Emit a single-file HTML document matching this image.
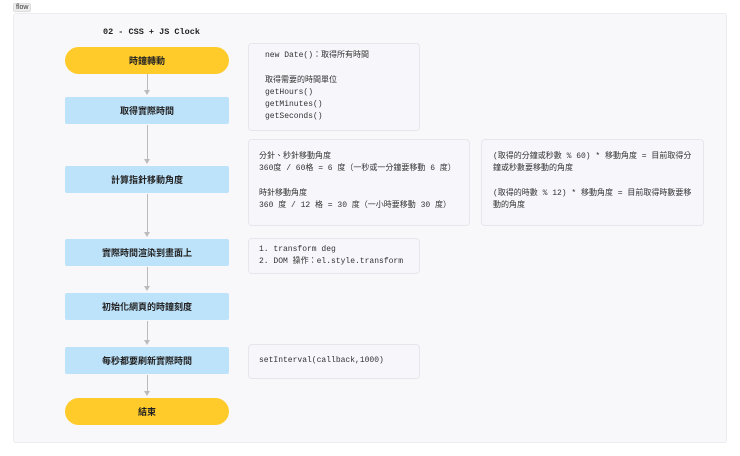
<!DOCTYPE html>
<html><head><meta charset="utf-8"><style>
body{margin:0;width:740px;height:456px;background:#fff;position:relative;font-family:"Liberation Mono","Noto Sans CJK TC",monospace;overflow:hidden}
.tag{position:absolute;left:13px;top:3px;font:7px "Liberation Sans",sans-serif;background:#eee;border:1px solid #ddd;border-radius:2px;padding:0 2px;color:#333}
.wrap{position:absolute;left:13px;top:13px;width:712px;height:428px;background:#f8f8fa;border:1px solid #ececee;border-radius:3px}
.title{position:absolute;left:103px;top:27px;font-size:8.5px;font-weight:bold;color:#222}
.n{position:absolute;left:65px;width:164px;height:27px;display:flex;align-items:center;justify-content:center;font:bold 9px "Liberation Sans","Noto Sans CJK TC",sans-serif;color:#222}
.y{background:#ffcb2b;border-radius:14px}
.b{background:#bde3fb;border-radius:2px}
.l{position:absolute;left:147px;width:1px;background:#bbb}
.a{position:absolute;left:144px;width:0;height:0;border-left:3.5px solid transparent;border-right:3.5px solid transparent;border-top:5px solid #bbb}
.box{position:absolute;background:#f7f6fb;border:1px solid #e6e6ec;border-radius:4px;font-size:8px;line-height:12.3px;color:#333;white-space:pre;box-sizing:border-box}
</style></head><body>
<div class="tag">flow</div>
<div class="wrap"></div>
<div class="title">02 - CSS + JS Clock</div>
<div class="n y" style="top:47px">時鐘轉動</div>
<div class="n b" style="top:97px">取得實際時間</div>
<div class="n b" style="top:166px">計算指針移動角度</div>
<div class="n b" style="top:239px">實際時間渲染到畫面上</div>
<div class="n b" style="top:293px">初始化網頁的時鐘刻度</div>
<div class="n b" style="top:347px">每秒都要刷新實際時間</div>
<div class="n y" style="top:398px">結束</div>
<div class="l" style="top:74px;height:18px"></div><div class="a" style="top:90px"></div>
<div class="l" style="top:125px;height:36px"></div><div class="a" style="top:159px"></div>
<div class="l" style="top:194px;height:40px"></div><div class="a" style="top:232px"></div>
<div class="l" style="top:267px;height:21px"></div><div class="a" style="top:286px"></div>
<div class="l" style="top:321px;height:21px"></div><div class="a" style="top:340px"></div>
<div class="l" style="top:375px;height:18px"></div><div class="a" style="top:391px"></div>
<div class="box" style="left:248px;top:43px;width:172px;height:88px;padding:6px 0 0 16px">new Date()：取得所有時間

取得需要的時間單位
getHours()
getMinutes()
getSeconds()</div>
<div class="box" style="left:248px;top:139px;width:222px;height:87px;padding:11px 0 0 10px">分針、秒針移動角度
360度 / 60格 = 6 度（一秒或一分鐘要移動 6 度）

時針移動角度
360 度 / 12 格 = 30 度（一小時要移動 30 度）</div>
<div class="box" style="left:481px;top:139px;width:223px;height:87px;padding:11px 0 0 11px">(取得的分鐘或秒數 % 60) * 移動角度 = 目前取得分
鐘或秒數要移動的角度

(取得的時數 % 12) * 移動角度 = 目前取得時數要移
動的角度</div>
<div class="box" style="left:248px;top:238px;width:172px;height:36px;padding:5px 0 0 10px">1. transform deg
2. DOM 操作：el.style.transform</div>
<div class="box" style="left:248px;top:344px;width:172px;height:35px;padding:10px 0 0 10px">setInterval(callback,1000)</div>
</body></html>
